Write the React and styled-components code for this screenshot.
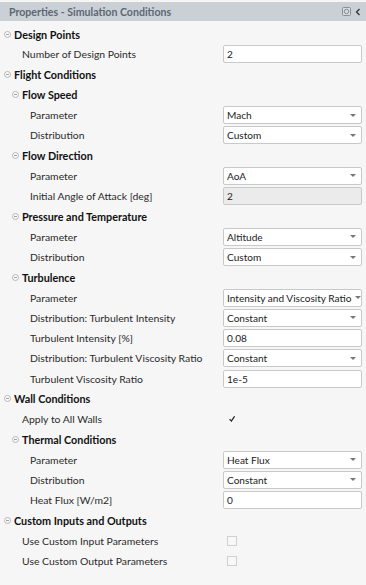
import React from 'react'
import styled, { createGlobalStyle } from 'styled-components'

const GlobalStyle = createGlobalStyle`
  html, body {
    margin: 0;
    padding: 0;
    background: #f6f6f6;
  }
  body {
    font-family: Lato, "Open Sans", sans-serif;
  }
`

const Panel = styled.div`
  width: 366px;
  height: 585px;
  background: #f6f6f6;
  box-sizing: border-box;
  padding-top: 2px;
  overflow: hidden;
`

const Header = styled.div`
  display: flex;
  align-items: center;
  justify-content: space-between;
  height: 19px;
  background: #cbd0d6;
  padding: 0 5px 0 9px;
`

const Title = styled.div`
  font-size: 10.6px;
  font-weight: 700;
  color: #5c6773;
`

const HeaderTools = styled.div`
  display: flex;
  align-items: center;
  gap: 4px;
`

const Body = styled.div`
  padding-top: 3px;
`

const Row = styled.div`
  display: grid;
  grid-template-columns: 1fr 139px;
  align-items: center;
  height: 20.27px;
  padding-right: 4px;
`

const GroupRow = styled.div`
  display: flex;
  align-items: center;
  height: 20.27px;
  padding-left: ${p => p.$level * 8 + 4}px;
  gap: 3px;
`

const GroupTitle = styled.span`
  font-size: 10.8px;
  font-weight: 700;
  color: #111;
`

const Label = styled.span`
  font-size: 10.4px;
  color: #2a2a2a;
  padding-left: ${p => p.$level * 8 + 22}px;
  white-space: nowrap;
`

const Field = styled.div`
  display: flex;
  align-items: center;
  justify-content: space-between;
  height: 18px;
  box-sizing: border-box;
  border: 1px solid #c9c9c9;
  border-radius: 2px;
  background: ${p => (p.$disabled ? '#ebebeb' : '#ffffff')};
  padding: 0 5px 0 3px;
  font-size: 10.1px;
  color: #222;
  white-space: nowrap;
  overflow: hidden;
`

const Arrow = styled.span`
  width: 0;
  height: 0;
  border-left: 3px solid transparent;
  border-right: 3px solid transparent;
  border-top: 3px solid #777;
  flex-shrink: 0;
  margin-left: 3px;
`

const Check = styled.div`
  width: 10px;
  height: 10px;
  box-sizing: border-box;
  border: 1px solid ${p => (p.$checked ? 'transparent' : '#cfcfcf')};
  background: ${p => (p.$checked ? 'transparent' : '#f8f8f8')};
  margin-left: 4px;
  display: flex;
  align-items: center;
  justify-content: center;
`

const Toggle = () => (
  <svg width="7" height="7" viewBox="0 0 7 7">
    <circle cx="3.5" cy="3.5" r="3" fill="#fafafa" stroke="#a7a7a7" strokeWidth="0.8" />
    <path d="M2 3.5h3" stroke="#8a8a8a" strokeWidth="0.8" />
  </svg>
)

const Group = ({ title, level = 0 }) => (
  <GroupRow $level={level}>
    <Toggle />
    <GroupTitle>{title}</GroupTitle>
  </GroupRow>
)

const TextRow = ({ label, value, level = 0, disabled }) => (
  <Row>
    <Label $level={level}>{label}</Label>
    <Field $disabled={disabled}>{value}</Field>
  </Row>
)

const SelectRow = ({ label, value, level = 0 }) => (
  <Row>
    <Label $level={level}>{label}</Label>
    <Field>
      <span>{value}</span>
      <Arrow />
    </Field>
  </Row>
)

const CheckRow = ({ label, checked, level = 0 }) => (
  <Row>
    <Label $level={level}>{label}</Label>
    <Check $checked={checked}>
      {checked && (
        <svg width="10" height="10" viewBox="0 0 10 10">
          <path d="M2 5.2l2.2 2.4L8.2 1.8" fill="none" stroke="#222" strokeWidth="1.6" />
        </svg>
      )}
    </Check>
  </Row>
)

export default function App() {
  return (
    <Panel>
      <GlobalStyle />
      <Header>
        <Title>Properties - Simulation Conditions</Title>
        <HeaderTools>
          <svg width="9" height="9" viewBox="0 0 9 9">
            <rect x="0.5" y="0.5" width="8" height="8" rx="1" fill="#d8dce0" stroke="#8a9096" />
            <circle cx="4.5" cy="4.5" r="2.2" fill="none" stroke="#7a8086" strokeWidth="0.9" />
          </svg>
          <svg width="6" height="8" viewBox="0 0 6 8">
            <path d="M4.5 1L1.5 4l3 3" fill="none" stroke="#333" strokeWidth="1.3" />
          </svg>
        </HeaderTools>
      </Header>
      <Body>
        <Group title="Design Points" />
        <TextRow label="Number of Design Points" value="2" />
        <Group title="Flight Conditions" />
        <Group title="Flow Speed" level={1} />
        <SelectRow label="Parameter" value="Mach" level={1} />
        <SelectRow label="Distribution" value="Custom" level={1} />
        <Group title="Flow Direction" level={1} />
        <SelectRow label="Parameter" value="AoA" level={1} />
        <TextRow label="Initial Angle of Attack [deg]" value="2" level={1} disabled />
        <Group title="Pressure and Temperature" level={1} />
        <SelectRow label="Parameter" value="Altitude" level={1} />
        <SelectRow label="Distribution" value="Custom" level={1} />
        <Group title="Turbulence" level={1} />
        <SelectRow label="Parameter" value="Intensity and Viscosity Ratio" level={1} />
        <SelectRow label="Distribution: Turbulent Intensity" value="Constant" level={1} />
        <TextRow label="Turbulent Intensity [%]" value="0.08" level={1} />
        <SelectRow label="Distribution: Turbulent Viscosity Ratio" value="Constant" level={1} />
        <TextRow label="Turbulent Viscosity Ratio" value="1e-5" level={1} />
        <Group title="Wall Conditions" />
        <CheckRow label="Apply to All Walls" checked />
        <Group title="Thermal Conditions" level={1} />
        <SelectRow label="Parameter" value="Heat Flux" level={1} />
        <SelectRow label="Distribution" value="Constant" level={1} />
        <TextRow label="Heat Flux [W/m2]" value="0" level={1} />
        <Group title="Custom Inputs and Outputs" />
        <CheckRow label="Use Custom Input Parameters" />
        <CheckRow label="Use Custom Output Parameters" />
      </Body>
    </Panel>
  )
}
